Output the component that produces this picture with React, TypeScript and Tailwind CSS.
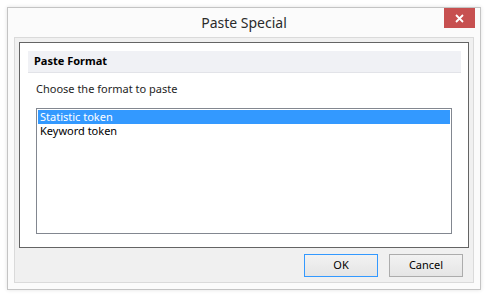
import React from "react";

const font = { fontFamily: '"Noto Sans", "Open Sans", sans-serif' };

const items = ["Statistic token", "Keyword token"];

export default function App() {
  const selected = 0;

  return (
    <div className="h-[299px] w-[490px] bg-white pl-[7px] pt-[7px]" style={font}>
      <div className="flex h-[283px] w-[474px] flex-col border border-[#c4c4c4] bg-[#fbfbfb] shadow-[0_0_4px_rgba(0,0,0,0.12)]">
        {/* title bar */}
        <div className="relative flex h-[29px] items-center justify-center">
          <span className="text-[14px] leading-none text-[#2b2b2b]">Paste Special</span>
          <button className="absolute right-[5px] top-0 flex h-[20px] w-[31px] items-center justify-center bg-[#c75050]">
            <svg width="9" height="9" viewBox="0 0 9 9">
              <path d="M1 1 L8 8 M8 1 L1 8" stroke="#fff" strokeWidth="1.8" />
            </svg>
          </button>
        </div>

        {/* client area */}
        <div className="mx-[6px] mb-[6px] flex flex-1 flex-col border border-[#dadada] bg-[#f0f0f0] p-[4px]">
          <div className="flex h-[206px] flex-col border border-[#646464] bg-white">
            <div className="ml-[8px] mr-[7px] mt-[8px] flex h-[22px] items-center border-b border-[#e2e3e8] bg-[#f0f1f5] pl-[6px]">
              <span className="text-[11px] font-bold text-black">Paste Format</span>
            </div>
            <p className="ml-[16px] mt-[8px] text-[11px] leading-[16px] text-[#1e1e1e]">
              Choose the format to paste
            </p>
            <ul className="mx-[16px] mb-[13px] mt-[11px] flex-1 border border-[#828790] p-[1px]">
              {items.map((item, i) => (
                <li
                  key={item}
                  className={
                    i === selected
                      ? "h-[14px] bg-[#3399ff] pl-[2px] text-[11px] leading-[14px] text-white"
                      : "h-[14px] pl-[2px] text-[11px] leading-[14px] text-black"
                  }
                >
                  {item}
                </li>
              ))}
            </ul>
          </div>

          <div className="mt-[6px] flex justify-end gap-[11px] pr-[6px]">
            <button className="flex h-[23px] w-[74px] items-center justify-center border border-[#3399ff] bg-gradient-to-b from-[#f2f2f2] to-[#e5e5e5] text-[11px] text-black">
              OK
            </button>
            <button className="flex h-[23px] w-[74px] items-center justify-center border border-[#acacac] bg-gradient-to-b from-[#f2f2f2] to-[#e5e5e5] text-[11px] text-black">
              Cancel
            </button>
          </div>
        </div>
      </div>
    </div>
  );
}
